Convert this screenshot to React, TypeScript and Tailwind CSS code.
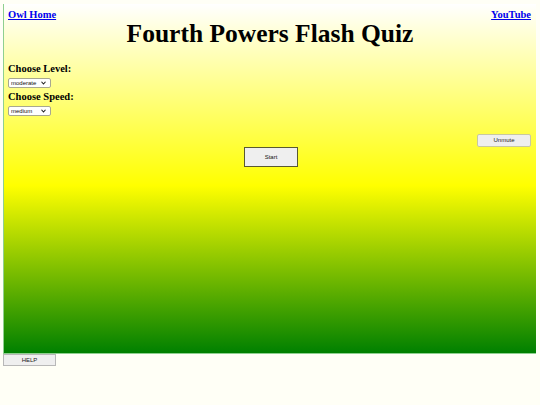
function SmallSelect({ value }: { value: string }) {
  return (
    <div className="relative mt-[3px] h-[10px] w-[43px]" style={{ fontFamily: '"Liberation Sans", Arial, sans-serif' }}>
      <select className="block h-[10px] w-[43px] appearance-none rounded-[2px] border border-[#a8a890] bg-white pl-[2px] text-[6px] leading-[8px] text-[#111]">
        <option>{value}</option>
      </select>
      <svg className="pointer-events-none absolute right-[5px] top-[3px] h-[4px] w-[5px]" viewBox="0 0 10 8">
        <path d="M1 1.5 L5 6 L9 1.5" fill="none" stroke="#222" strokeWidth="2.2" />
      </svg>
    </div>
  );
}

export default function App() {
  const serif = { fontFamily: '"Liberation Serif", "Times New Roman", serif' };
  return (
    <div className="min-h-[405px] w-[540px] bg-[#fffff6] pt-[4px] text-black" style={{ fontFamily: '"Liberation Sans", Arial, sans-serif' }}>
      {/* main panel with the gradient */}
      <div className="ml-[3px] flex h-[350px] w-[533px] flex-col border-b border-l border-[#8fd08f] bg-[linear-gradient(to_bottom,#ffffff_0%,#ffff00_52%,#008000_100%)] px-[4px]">
        <div className="flex items-start justify-between pt-[4px]" style={serif}>
          <a href="#" className="text-[10.5px] font-bold leading-[13px] text-[#0000ee] underline">Owl Home</a>
          <a href="#" className="mr-[1px] text-[10.5px] font-bold leading-[13px] text-[#0000ee] underline">YouTube</a>
        </div>
        <h1 className="-mt-[2px] text-center text-[25.5px] font-bold leading-[30px]" style={serif}>
          Fourth Powers Flash Quiz
        </h1>

        <div className="mt-[13px] flex flex-col items-start" style={serif}>
          <div className="text-[10.5px] font-bold leading-[13px]">Choose Level:</div>
          <SmallSelect value="moderate" />
          <div className="mt-[2px] text-[10.5px] font-bold leading-[13px]">Choose Speed:</div>
          <SmallSelect value="medium" />
        </div>

        <div className="mt-[18px] flex justify-end pr-[1px]">
          <button className="h-[13px] w-[54px] rounded-[2px] border border-[#c8c8a0] bg-[#efefef] text-[6px] text-[#222]">
            Unmute
          </button>
        </div>
        <div className="flex justify-center pl-[2px]">
          <button className="h-[20px] w-[54px] border-[1.5px] border-[#5a5a30] bg-[#efefef] text-[6px] text-[#111]">
            Start
          </button>
        </div>
      </div>

      <button className="ml-[3px] block h-[12px] w-[53px] border border-[#b8b8b8] bg-[#efefef] text-[6px] text-[#222]">
        HELP
      </button>
    </div>
  );
}
